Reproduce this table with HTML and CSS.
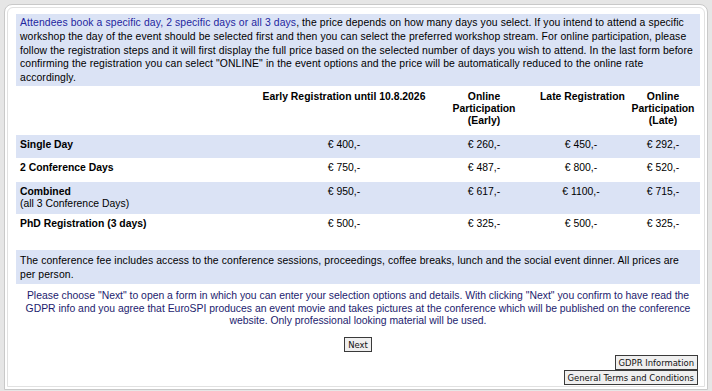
FILE: index.html
```html
<!DOCTYPE html>
<html>
<head>
<meta charset="utf-8">
<link rel="stylesheet" href="styles.css">
</head>
<body>
<div class="outer">
  <div class="inner">
    <div class="intro">
      <span class="hl">Attendees book a specific day, 2 specific days or all 3 days</span>, the price depends on how many days you select. If you intend to attend a specific workshop the day of the event should be selected first and then you can select the preferred workshop stream. For online participation, please follow the registration steps and it will first display the full price based on the selected number of days you wish to attend. In the last form before confirming the registration you can select "ONLINE" in the event options and the price will be automatically reduced to the online rate<br>accordingly.
    </div>
    <table class="prices">
      <colgroup>
        <col class="c1"><col class="c2"><col class="c3"><col class="c4"><col class="c5">
      </colgroup>
      <thead>
        <tr class="head">
          <th></th>
          <th class="nowrap">Early Registration until 10.8.2026</th>
          <th>Online<br>Participation<br>(Early)</th>
          <th class="nowrap">Late Registration</th>
          <th>Online<br>Participation<br>(Late)</th>
        </tr>
      </thead>
      <tbody>
        <tr class="row alt">
          <td class="label">Single Day</td>
          <td>€ 400,-</td><td>€ 260,-</td><td>€ 450,-</td><td>€ 292,-</td>
        </tr>
        <tr class="row">
          <td class="label">2 Conference Days</td>
          <td>€ 750,-</td><td>€ 487,-</td><td>€ 800,-</td><td>€ 520,-</td>
        </tr>
        <tr class="row alt">
          <td class="label">Combined<br><span class="sub">(all 3 Conference Days)</span></td>
          <td>€ 950,-</td><td>€ 617,-</td><td>€ 1100,-</td><td>€ 715,-</td>
        </tr>
        <tr class="row">
          <td class="label">PhD Registration (3 days)</td>
          <td>€ 500,-</td><td>€ 325,-</td><td>€ 500,-</td><td>€ 325,-</td>
        </tr>
      </tbody>
    </table>
    <div class="fee">The conference fee includes access to the conference sessions, proceedings, coffee breaks, lunch and the social event dinner. All prices are per person.</div>
    <p class="note">Please choose "Next" to open a form in which you can enter your selection options and details. With clicking "Next" you confirm to have read the GDPR info and you agree that EuroSPI produces an event movie and takes pictures at the conference which will be published on the conference website. Only professional looking material will be used.</p>
    <div class="next-wrap"><button class="btn" type="button">Next</button></div>
    <div class="links">
      <button class="btn" type="button">GDPR Information</button>
      <button class="btn" type="button">General Terms and Conditions</button>
    </div>
  </div>
</div>
</body>
</html>
```
FILE: styles.css
```css
html, body {
  margin: 0;
  padding: 0;
  height: 100%;
}
body {
  background: #e6e6e6;
  font-family: "Liberation Sans", Arial, sans-serif;
  font-size: 10.4px;
  color: #000;
  overflow: hidden;
}
.outer {
  margin: 4px 4px 0 4px;
  background: #fff;
  border: 1px solid #c9c9c9;
  border-radius: 8px 8px 0 0;
  padding: 2px 2px 2px 2px;
}
.inner {
  border: 1px solid #e1e1e1;
  border-radius: 6px 6px 0 0;
  padding: 6px 4px 1px 8px;
}
.intro {
  background: #dbe3f5;
  padding: 2px 4px 1px 4px;
  line-height: 13.75px;
  letter-spacing: 0.1px;
}
.hl {
  color: #1e26a0;
}
.prices {
  width: 684px;
  table-layout: fixed;
  border-collapse: collapse;
  border-spacing: 0;
  margin-top: 1px;
}
.c1 { width: 240px; }
.c2 { width: 176px; }
.c3 { width: 104px; }
.c4 { width: 90px; }
.c5 { width: 74px; }
.prices th, .prices td {
  padding: 4px;
  line-height: 12px;
  vertical-align: top;
  text-align: center;
}
.prices th {
  font-weight: bold;
  height: 40px;
}
.nowrap { white-space: nowrap; }
.row td { height: 15.5px; }
.alt { background: #dbe3f5; }
.prices td.label {
  text-align: left;
  font-weight: bold;
}
.sub { font-weight: normal; }
.fee {
  background: #dbe3f5;
  margin-top: 13px;
  padding: 4px 12px 3px 4px;
  line-height: 13.5px;
  letter-spacing: 0.1px;
}
.note {
  margin: 6px 0 0 0;
  text-align: center;
  color: #1c1c6e;
  line-height: 12.5px;
}
.next-wrap {
  display: flex;
  justify-content: center;
  margin-top: 9px;
}
.links {
  display: flex;
  flex-direction: column;
  align-items: flex-end;
  margin-top: 3px;
  padding-right: 2px;
}
.btn {
  font-family: "DejaVu Sans Condensed", "DejaVu Sans", sans-serif;
  font-size: 9.4px;
  line-height: 13px;
  color: #111;
  background: #efefef;
  border: 1px solid #3a3a3a;
  border-radius: 0;
  padding: 0 3px;
  margin: 0;
}
```
